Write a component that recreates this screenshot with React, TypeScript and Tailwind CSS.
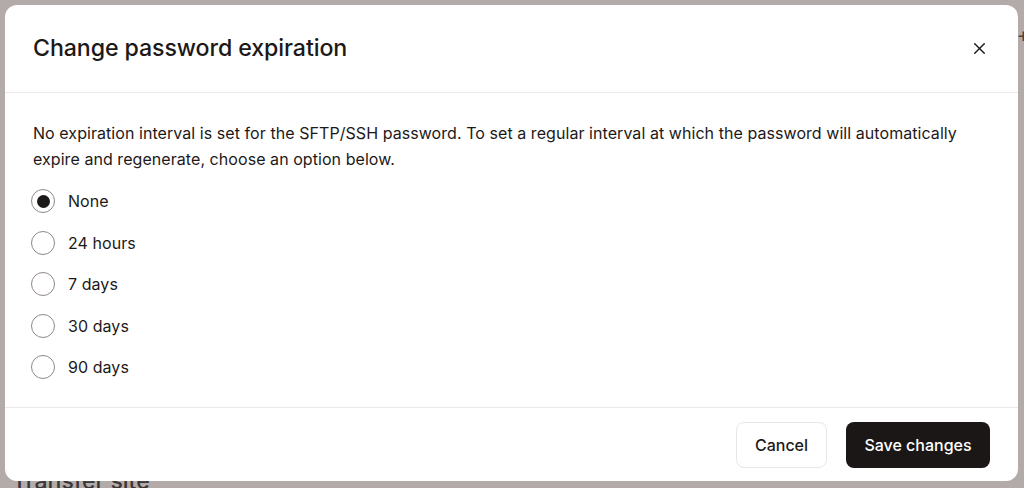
import { X } from 'lucide-react';

const OPTIONS = ['None', '24 hours', '7 days', '30 days', '90 days'];

const App = () => {
  return (
    <div className="relative h-[488px] w-[1024px] overflow-hidden bg-[#b3abaa] font-['Inter','Liberation_Sans',sans-serif]">
      {/* page behind the overlay */}
      <p className="absolute left-[12px] top-[466px] text-[23px] leading-[30px] font-medium text-[#3b3535]">Transfer site</p>
      <span className="absolute right-[-6px] top-[20px] text-[20px] text-[#4a4343]">+</span>

      <div className="relative ml-[5px] mt-[5px] flex h-[476px] w-[1013px] flex-col rounded-[12px] bg-white text-[#1d1919]">
        <header className="flex h-[88px] shrink-0 items-center justify-between border-b border-[#ece8e6] pl-[28px] pr-[27px]">
          <h2 className="text-[23.2px] font-medium tracking-[-0.1px]">Change password expiration</h2>
          <button className="flex size-6 items-center justify-center text-[#1d1919]">
            <X className="size-[19px]" strokeWidth={1.8} />
          </button>
        </header>

        <div className="flex flex-1 flex-col border-b border-[#ece8e6] px-[28px] pt-[27px]">
          <p className="text-[16px] leading-[26px] tracking-[0.06px]">
            No expiration interval is set for the SFTP/SSH password. To set a regular interval at which the password will automatically
            expire and regenerate, choose an option below.
          </p>
          <div className="-ml-[2px] mt-[17px] flex flex-col gap-[17.5px]">
            {OPTIONS.map((o, i) => (
              <label key={o} className="flex h-[24px] items-center gap-[13px]">
                <span className="flex size-[24px] shrink-0 items-center justify-center rounded-full border-[1.5px] border-[#8f8886] bg-white">
                  {i === 0 && <span className="size-[13px] rounded-full bg-[#1d1919]" />}
                </span>
                <span className="text-[16px] tracking-[0.06px]">{o}</span>
              </label>
            ))}
          </div>
        </div>

        <footer className="flex h-[73px] shrink-0 items-center justify-end gap-[19px] pr-[28px]">
          <button className="h-[46px] w-[91px] rounded-[8px] border border-[#ebe6e3] bg-white text-[16px] font-medium">
            Cancel
          </button>
          <button className="h-[46px] w-[144px] rounded-[8px] bg-[#1c1717] text-[16px] font-medium text-white">
            Save changes
          </button>
        </footer>
      </div>
    </div>
  );
};

export default App;
